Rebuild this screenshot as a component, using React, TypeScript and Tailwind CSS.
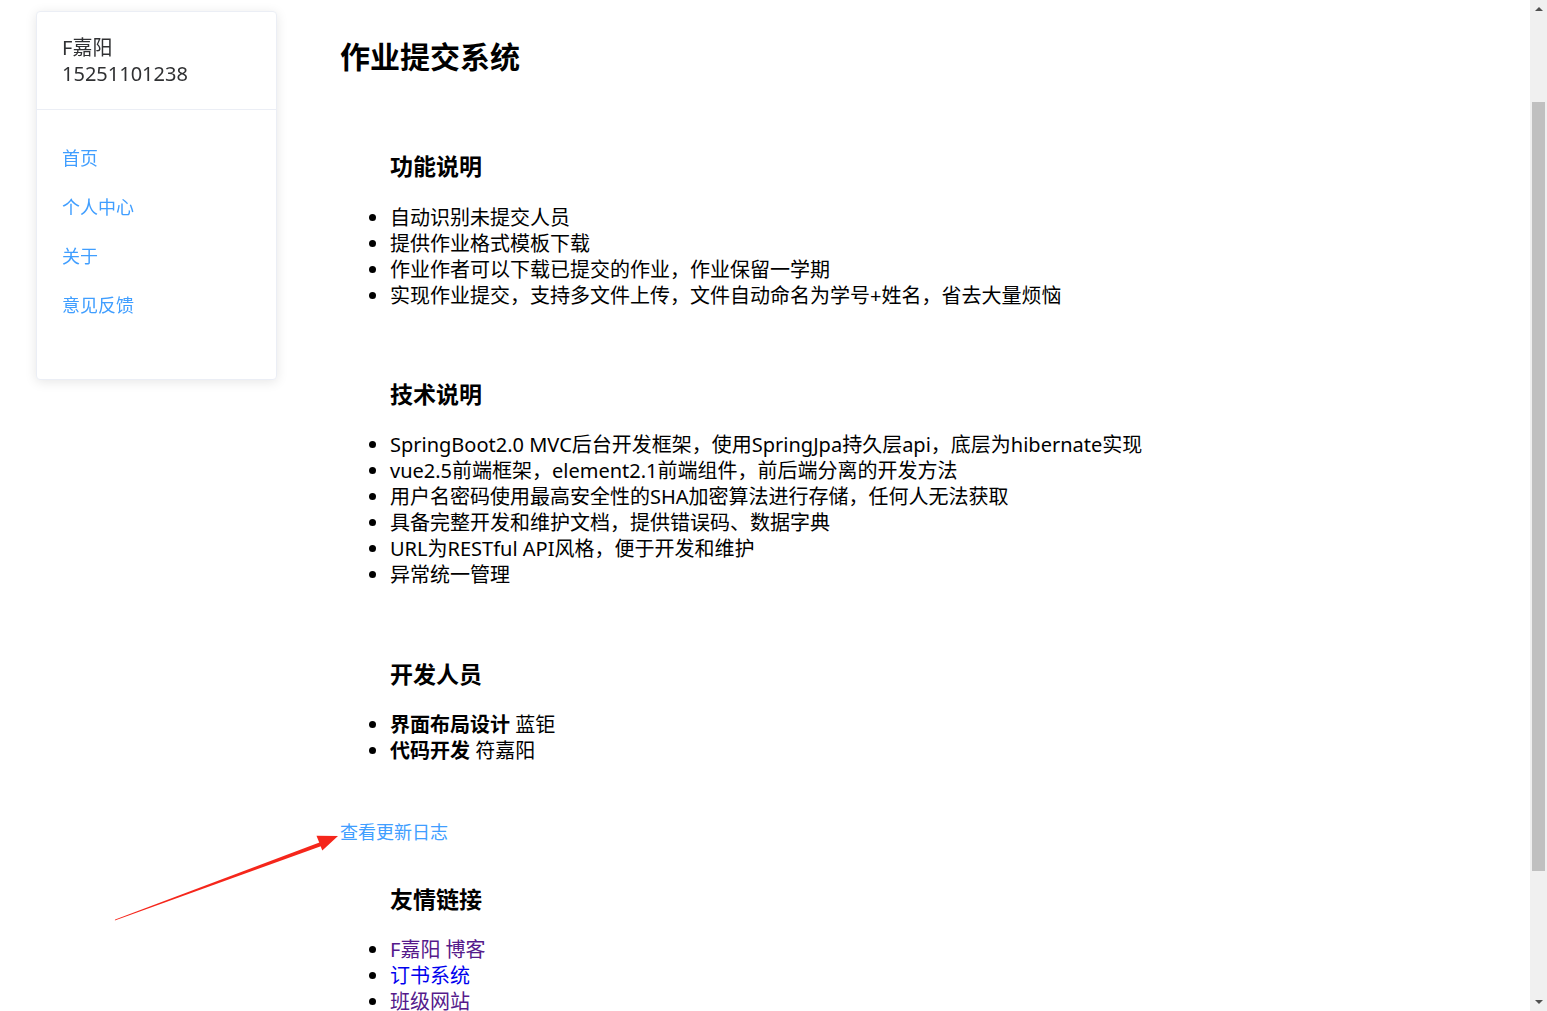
import React, { useEffect, useRef } from 'react';

const features = [
  '自动识别未提交人员',
  '提供作业格式模板下载',
  '作业作者可以下载已提交的作业，作业保留一学期',
  '实现作业提交，支持多文件上传，文件自动命名为学号+姓名，省去大量烦恼',
];

const techs = [
  'SpringBoot2.0 MVC后台开发框架，使用SpringJpa持久层api，底层为hibernate实现',
  'vue2.5前端框架，element2.1前端组件，前后端分离的开发方法',
  '用户名密码使用最高安全性的SHA加密算法进行存储，任何人无法获取',
  '具备完整开发和维护文档，提供错误码、数据字典',
  'URL为RESTful API风格，便于开发和维护',
  '异常统一管理',
];

const navItems = ['首页', '个人中心', '关于', '意见反馈'];

const Arrow: React.FC = () => (
  <svg className="absolute left-0 top-0 pointer-events-none" width="400" height="1011" viewBox="0 0 400 1011">
    {/* tapered shaft */}
    <polygon points="115.2,919.5 114.8,920.5 321.5,846.0 320.1,842.2" fill="#f5261b" />
    {/* head */}
    <polygon points="338,836 316.5,835.8 319.6,843.6 322.3,850.6" fill="#f5261b" />
  </svg>
);

// classic browser scrollbar, as seen in the screenshot
const ScrollBar: React.FC = () => (
  <div className="absolute right-0 top-0 h-full w-[17px] bg-[#f0f0f0] flex flex-col items-center pointer-events-none">
    <div className="h-[17px] w-full flex items-center justify-center">
      <svg width="8" height="5" viewBox="0 0 8 5">
        <polygon points="0,5 4,1 8,5" fill="#505050" />
      </svg>
    </div>
    <div className="h-[85px] shrink-0" />
    <div className="h-[769px] w-[13px] bg-[#c0c0c0] shrink-0" />
    <div className="flex-1" />
    <div className="h-[17px] w-full flex items-center justify-center">
      <svg width="8" height="5" viewBox="0 0 8 5">
        <polygon points="0,0 8,0 4,4" fill="#505050" />
      </svg>
    </div>
  </div>
);

const App: React.FC = () => {
  const scrollRef = useRef<HTMLDivElement>(null);

  useEffect(() => {
    if (scrollRef.current) scrollRef.current.scrollTop = 110;
  }, []);

  return (
    <div
      className="relative h-screen w-full bg-white text-black"
      style={{ fontFamily: '"Noto Sans", "Noto Sans CJK SC", sans-serif' }}
    >
      <div ref={scrollRef} className="h-full w-[1530px] overflow-y-auto [scrollbar-width:none]">
        <div className="flex items-start">
          {/* Sidebar card */}
          <div className="sticky top-[11px] ml-[36px] mt-[11px] w-[241px] h-[369px] shrink-0 bg-white border border-[#ebeef5] rounded-[4px] shadow-[0_2px_12px_0_rgba(0,0,0,0.1)]">
            <div className="px-[25px] pt-[23px] pb-[22px] border-b border-[#ebeef5] text-[20px] leading-[26px] text-[#303133]">
              <div>F嘉阳</div>
              <div>15251101238</div>
            </div>
            <ul className="px-[25px] pt-[36px] flex flex-col gap-[25px]">
              {navItems.map((n) => (
                <li key={n} className="text-[18px] leading-[24px] text-[#409eff] cursor-pointer">
                  {n}
                </li>
              ))}
            </ul>
          </div>

          {/* Main content */}
          <div className="ml-[63px] pt-[147px] pb-[160px] flex-1">
            <h1 className="text-[30px] leading-[40px] font-bold">作业提交系统</h1>

            <h2 className="mt-[73px] pl-[50px] text-[23px] leading-[32px] font-bold">功能说明</h2>
            <ul className="mt-[23px] pl-[50px] list-disc text-[20px] leading-[26px]">
              {features.map((f) => (
                <li key={f}>{f}</li>
              ))}
            </ul>

            <h2 className="mt-[69px] pl-[50px] text-[23px] leading-[32px] font-bold">技术说明</h2>
            <ul className="mt-[22px] pl-[50px] list-disc text-[20px] leading-[26px]">
              {techs.map((t) => (
                <li key={t}>{t}</li>
              ))}
            </ul>

            <h2 className="mt-[70px] pl-[50px] text-[23px] leading-[32px] font-bold">开发人员</h2>
            <ul className="mt-[22px] pl-[50px] list-disc text-[20px] leading-[26px]">
              <li>
                <b>界面布局设计</b> 蓝钜
              </li>
              <li>
                <b>代码开发</b> 符嘉阳
              </li>
            </ul>

            <a className="block mt-[56px] text-[18px] leading-[24px] text-[#409eff] cursor-pointer">查看更新日志</a>

            <h2 className="mt-[39px] pl-[50px] text-[23px] leading-[32px] font-bold">友情链接</h2>
            <ul className="mt-[22px] pl-[50px] list-disc text-[20px] leading-[26px]">
              <li>
                <a className="text-[#551a8b] cursor-pointer">F嘉阳 博客</a>
              </li>
              <li>
                <a className="text-[#0000ee] cursor-pointer">订书系统</a>
              </li>
              <li>
                <a className="text-[#551a8b] cursor-pointer">班级网站</a>
              </li>
            </ul>
          </div>
        </div>
      </div>
      <ScrollBar />
      <Arrow />
    </div>
  );
};

export default App;
